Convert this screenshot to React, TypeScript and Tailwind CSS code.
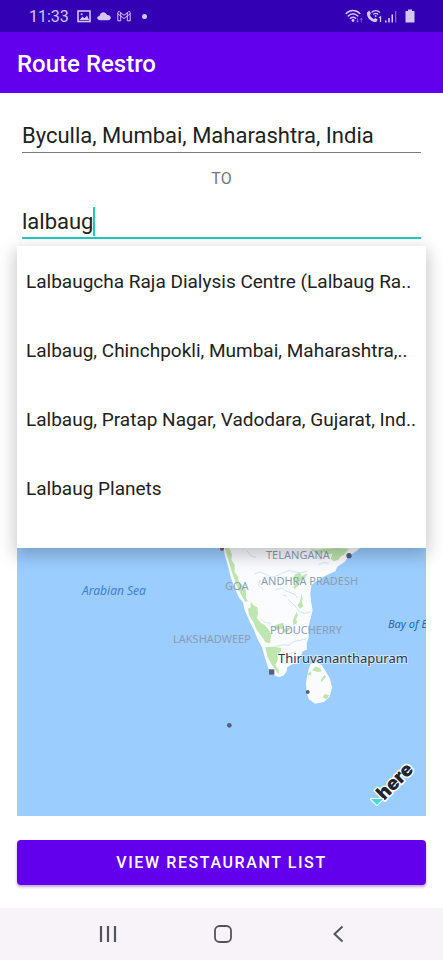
import React from "react";

const suggestions = [
  "Lalbaugcha Raja Dialysis Centre (Lalbaug Ra..",
  "Lalbaug, Chinchpokli, Mumbai, Maharashtra,..",
  "Lalbaug, Pratap Nagar, Vadodara, Gujarat, Ind..",
  "Lalbaug Planets",
];

function StatusBar() {
  return (
    <div className="flex h-8 items-center justify-between bg-[#3300b3] pr-7 pl-[29px] text-[#d3c6f3]">
      <div className="flex items-center gap-[6px]">
        <span className="mr-[2px] pt-[2px] text-base leading-8">11:33</span>
        <svg viewBox="0 0 14 14" className="size-[14px]" fill="none" aria-hidden="true">
          <rect x="1" y="2" width="12" height="10.5" stroke="currentColor" strokeWidth="1.6" />
          <path d="M2.5 11 5.5 7.5 7.5 9.3 10 6.5 12 11Z" fill="currentColor" />
          <circle cx="4.6" cy="5.2" r="1" fill="currentColor" />
        </svg>
        <svg viewBox="0 0 14 14" className="size-[14px]" fill="currentColor" aria-hidden="true">
          <path d="M3.3 11.3C-.5 11.3-.8 7.4 2.5 7 3 3 8.300 1.700 10 6 12.500 5.700 13.800 7.300 13.800 8.800 13.800 10.300 12.700 11.300 11 11.300Z" />
        </svg>
        <svg viewBox="0 0 14 14" className="size-[14px]" fill="none" stroke="currentColor" strokeWidth="1" strokeLinejoin="round" aria-hidden="true">
          <path d="M.8 11.800V3.600Q.8 2.200 2.300 2.700L7 6.300 11.700 2.700Q13.200 2.200 13.200 3.600V11.800H10.300V7L7 9.500 3.700 7V11.800ZM3.700 3.800V7L.8 4.800M10.300 3.800V7L13.200 4.800" />
        </svg>
        <span className="ml-[5px] size-[5px] rounded-full bg-current" />
      </div>
      <div className="flex items-center gap-[3px]">
        <svg viewBox="0 0 18 16" className="h-4 w-[18px]" fill="none" stroke="currentColor" strokeWidth="1.500" strokeLinecap="round" aria-hidden="true">
          <path d="M1.200 5.500C5 1.500 11 1.500 14.800 5.500M3.200 8C6.300 5 9.700 5 12.800 8M5.400 10.300C7 8.900 9 8.900 10.600 10.300" />
          <circle cx="8" cy="12.500" r=".7" fill="currentColor" />
          <path d="M12.500 10.500V14M11.300 12.800 12.500 14 13.700 12.800M16.300 14V10.500M15.200 11.600 16.300 10.500 17.400 11.600" strokeWidth=".9" opacity=".45" />
        </svg>
        <svg viewBox="0 0 16 16" className="size-4" fill="none" aria-hidden="true">
          <path d="M1 4.500 3.200 2.600 5 5.500 3.900 7C4.500 8.600 6 10.200 7.800 11L9.200 9.900 11.700 11.500 10.500 13.700C5.500 15 .2 9.500 1 4.500Z" fill="currentColor" />
          <path d="M5.500 4.500C8 2 11.500 2 14 4.500M7.300 6.500C9 5 10.700 5 12.200 6.500" stroke="currentColor" strokeWidth="1.300" />
          <circle cx="9.700" cy="8" r=".9" fill="currentColor" />
          <path d="M13 9.700 14.500 8.800V14" stroke="currentColor" strokeWidth="1.300" />
        </svg>
        <svg viewBox="0 0 12 16" className="h-4 w-3" fill="currentColor" aria-hidden="true">
          <path d="M0 12.500H1.600V14.500H0ZM3.200 10H4.800V14.500H3.200ZM6.500 6.500H8V14.500H6.500Z" />
          <path d="M10 3H11.300V14.500H10Z" opacity=".5" />
        </svg>
        <svg viewBox="0 0 10 14" className="ml-[5px] h-[14px] w-[10px]" fill="currentColor" aria-hidden="true">
          <path d="M3 .5H7V2H9Q9.500 2 9.500 2.600V13Q9.500 13.500 9 13.500H1Q.5 13.500 .5 13V2.600Q.5 2 1 2H3Z" />
        </svg>
      </div>
    </div>
  );
}

function CoastMap() {
  return (
    <div className="relative flex-1 overflow-hidden bg-[#9bcdff]">
      <svg
        viewBox="0 0 409 268"
        className="absolute bottom-0 left-0 w-full"
        role="img"
        aria-label="Map of southern India"
        fontFamily="'Noto Sans', 'Open Sans', sans-serif"
      >
        <g transform="translate(183 -18) scale(.33333)">
          <path
            fill="#fafcff"
            d="M70 40 74 75 84 108 92 140 104 175 117 203 129 217 134 240 148 272 160 296 174 330 186 352 195 384 205 415 220 434 238 442 252 436 260 424 262 412 276 403 292 401 301 386 308 364 321 359 320 342 326 320 325 292 332 265 338 241 334 220 331 192 334 165 350 153 376 137 406 124 412 110 434 96 444 80 474 60 490 40Z"
          />
          <path
            fill="#fafcff"
            d="M345 393 332 402 326 418 321 440 318 460 320 490 327 508 345 521 372 516 389 500 396 472 390 446 377 424 365 405Z"
          />
          <g fill="#bfe6ae">
            <path d="M74 54 88 54 96 74 94 90 104 104 104 126 114 140 116 156 128 166 138 180 138 204 144 214 136 216 124 196 112 172 104 150 95 126 88 98Z" />
            <path d="M152 214 160 226 172 232 174 252 170 264 184 280 192 284 204 296 214 312 210 340 196 336 184 318 170 300 160 276 147 256 144 236 152 232Z" />
            <path d="M196 352 218 350 244 354 242 366 232 374 234 390 226 404 236 420 236 434 228 422 214 402 202 380Z" />
            <path d="M330 56 350 60 376 56 410 54 446 56 432 74 424 78 414 90 402 94 392 86 398 70 384 74 370 66 356 76Z" />
            <path d="M286 132 300 128 306 138 322 130 318 142 300 154 296 166 284 178 280 172 288 158 278 148Z" />
            <path d="M304 192 308 204 306 216 310 228 300 236 292 226 300 216Z" />
            <path d="M290 246 294 256 288 268 292 278 280 286 278 272 284 258ZM228 284 250 278 252 294 232 300 220 292ZM252 296 276 292 262 306 250 308Z" />
            <path d="M347 410 360 414 366 424 352 426 336 420ZM332 424 334 436 326 434 324 440 322 432ZM374 434 378 442 364 456 362 450ZM374 492 388 496 380 508 368 502Z" />
          </g>
          <g fill="none" stroke="#b9d8f5" strokeWidth="2">
            <path d="M140 62 154 78 168 82M162 132 180 126 200 134 216 142 234 136 250 128 266 122 300 128 322 124M180 150 176 166 190 180M226 180 244 174 260 184 282 192 294 204M264 208 282 224 300 246 316 250 332 246M182 268 196 278 214 280M224 350 250 344 268 346 282 334 304 330 320 326M252 384 270 370 286 366M248 196 260 198M356 104 370 98 386 100M350 80 362 90" />
          </g>
          <g fill="#566079">
            <circle cx="66" cy="56" r="6" fill="#86506b" />
            <circle cx="447" cy="77" r="8" />
            <rect x="207" y="418" width="16" height="16" />
            <circle cx="323" cy="486" r="6" />
            <circle cx="88" cy="586" r="7" />
          </g>
        </g>
        <g fill="#8c9cb3" fontSize="11">
          <text x="249" y="11">TELANGANA</text>
          <text x="208" y="42">GOA</text>
          <text x="244" y="37">ANDHRA PRADESH</text>
          <text x="253" y="86">PUDUCHERRY</text>
          <text x="156" y="95">LAKSHADWEEP</text>
        </g>
        <g fill="#3f83cc" fontSize="11" fontStyle="italic">
          <text x="65" y="47" fontSize="12">Arabian Sea</text>
          <text x="371" y="80" fill="#2468b0">Bay of Bengal</text>
        </g>
        <text x="261" y="115" fontSize="13" fill="#2e3547" stroke="#ffffff" strokeWidth="2" strokeOpacity=".5" paintOrder="stroke">
          Thiruvananthapuram
        </text>
        <g stroke="#ffffff" strokeWidth="3" paintOrder="stroke" strokeLinejoin="round">
          <text
            transform="translate(367 253) rotate(-45)"
            fontFamily="Inter, sans-serif"
            fontWeight="900"
            fontSize="19"
            fill="#22252f"
          >
            here
          </text>
          <path d="M354 251H366L360 257Z" fill="#48dad0" strokeWidth="2" />
        </g>
      </svg>
    </div>
  );
}

export default function App() {
  return (
    <div className="flex min-h-screen flex-col bg-white font-['Roboto',sans-serif] text-[#212121]">
      <StatusBar />
      <header className="flex h-[61px] items-center bg-[#6200ee] px-[17px] pt-[2px]">
        <h1 className="text-2xl font-medium text-white">Route Restro</h1>
      </header>

      <main className="flex flex-1 flex-col px-[17px] pt-[26px] pb-[23px]">
        <div className="px-[5px]">
          <input
            type="text"
            aria-label="From"
            defaultValue="Byculla, Mumbai, Maharashtra, India"
            className="h-[34px] w-full border-b border-[#7c7c7c] text-[22px] outline-none"
          />
        </div>
        <p className="flex h-[52px] items-center justify-center text-base text-[#757575]">TO</p>
        <div className="relative z-10">
          <div className="mx-[5px] flex h-[34px] items-center border-b-2 border-[#1fcab8]">
            <input
              type="text"
              aria-label="To"
              defaultValue="lalbaug"
              className="h-8 [field-sizing:content] text-[22px] caret-transparent outline-none"
            />
            <span className="h-[29px] w-[2px] bg-[#1fcab8]" />
          </div>
          <ul className="absolute inset-x-0 top-full mt-[7px] h-[302px] overflow-hidden bg-white py-[2px] shadow-[0_6px_16px_2px_rgba(0,0,0,0.22)]">
            {suggestions.map((s) => (
              <li key={s}>
                <button type="button" className="h-[69px] w-full px-[9px] text-left text-[19px] whitespace-nowrap">
                  {s}
                </button>
              </li>
            ))}
          </ul>
        </div>
        <div className="mt-6 mb-6 flex flex-1 flex-col">
          <CoastMap />
        </div>
        <button
          type="button"
          className="h-[45px] rounded bg-[#6200ee] text-base font-medium tracking-widest text-white shadow-[0_2px_3px_rgba(60,0,140,0.35)]"
        >
          VIEW RESTAURANT LIST
        </button>
      </main>

      <nav className="grid h-[52px] grid-cols-[1fr_115px_115px_115px_1fr] place-items-center bg-[#f7f3f8] pl-[2px] text-[#55535a]" aria-label="System">
        <button type="button" aria-label="Recent apps" className="col-start-2">
          <svg viewBox="0 0 18 18" className="size-[18px]" fill="none" stroke="currentColor" strokeWidth="2.200">
            <path d="M2 1V17M9 1V17M16 1V17" />
          </svg>
        </button>
        <button type="button" aria-label="Home">
          <svg viewBox="0 0 18 18" className="size-[18px]" fill="none" stroke="currentColor" strokeWidth="1.800">
            <rect x="1" y="1" width="16" height="16" rx="4.500" />
          </svg>
        </button>
        <button type="button" aria-label="Back">
          <svg viewBox="0 0 18 18" className="size-[18px]" fill="none" stroke="currentColor" strokeWidth="2">
            <path d="M13.500 1.500 5.500 9 13.500 16.500" />
          </svg>
        </button>
      </nav>
    </div>
  );
}
